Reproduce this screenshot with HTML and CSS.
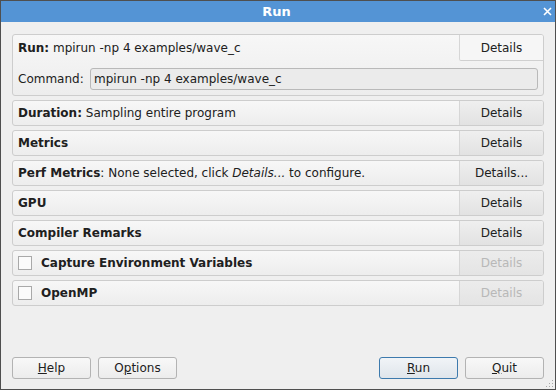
FILE: index.html
```html
<!DOCTYPE html>
<html>
<head>
  <meta charset="utf-8">
  <title>Run</title>
  <link rel="stylesheet" href="styles.css">
</head>
<body>
<div class="window">
  <div class="titlebar">
    <span></span>
    <span class="title">Run</span>
    <svg class="close" width="9" height="9" viewBox="0 0 9 9">
      <path d="M1 1 L8 8 M8 1 L1 8" stroke="#fff" stroke-width="1.6"/>
    </svg>
  </div>

  <div class="content">
    <div class="panel run-panel">
      <div class="run-head">
        <div class="label"><b>Run:</b> mpirun -np 4 examples/wave_c</div>
        <button class="details tab">Details</button>
      </div>
      <div class="command">
        <span>Command:</span>
        <div class="field">mpirun -np 4 examples/wave_c</div>
      </div>
    </div>

    <div class="panel row">
      <div class="label"><b>Duration:</b> Sampling entire program</div>
      <button class="details">Details</button>
    </div>
    <div class="panel row">
      <div class="label"><b>Metrics</b></div>
      <button class="details">Details</button>
    </div>
    <div class="panel row">
      <div class="label"><b>Perf Metrics</b>: None selected, click <i>Details...</i> to configure.</div>
      <button class="details">Details...</button>
    </div>
    <div class="panel row">
      <div class="label"><b>GPU</b></div>
      <button class="details">Details</button>
    </div>
    <div class="panel row">
      <div class="label"><b>Compiler Remarks</b></div>
      <button class="details">Details</button>
    </div>
    <div class="panel row">
      <div class="label"><span class="check"></span><b>Capture Environment Variables</b></div>
      <button class="details" disabled>Details</button>
    </div>
    <div class="panel row">
      <div class="label"><span class="check"></span><b>OpenMP</b></div>
      <button class="details" disabled>Details</button>
    </div>

    <div class="footer">
      <button class="btn"><u>H</u>elp</button>
      <button class="btn">O<u>p</u>tions</button>
      <span class="spacer"></span>
      <button class="btn default"><u>R</u>un</button>
      <button class="btn"><u>Q</u>uit</button>
    </div>
  </div>

  <svg class="grip" width="9" height="9" viewBox="0 0 9 9">
    <g fill="#a9a9a9">
      <rect x="7" y="1" width="1" height="1"/>
      <rect x="4" y="4" width="1" height="1"/>
      <rect x="7" y="4" width="1" height="1"/>
      <rect x="1" y="7" width="1" height="1"/>
      <rect x="4" y="7" width="1" height="1"/>
      <rect x="7" y="7" width="1" height="1"/>
    </g>
  </svg>
</div>
</body>
</html>
```

FILE: styles.css
```css
/* dialog window */
body {
  margin: 0;
  font-family: "DejaVu Sans", sans-serif;
  font-size: 12px;
  color: #202020;
}
.window {
  position: relative;
  width: 556px;
  height: 390px;
  box-sizing: border-box;
  border: 1px solid #4f4f4f;
  background: #efefef;
  display: flex;
  flex-direction: column;
}
.titlebar {
  height: 21px;
  background: #5494d5;
  display: grid;
  grid-template-columns: 1fr auto 1fr;
  align-items: center;
  padding-right: 3px;
}
.title {
  color: #fff;
  font-weight: bold;
  font-size: 13px;
}
.close {
  justify-self: end;
}
.content {
  flex: 1;
  display: flex;
  flex-direction: column;
  gap: 4px;
  padding: 12px 11px 10px 11px;
}

/* panels */
.panel {
  border: 1px solid #cdcdcd;
  border-radius: 3px;
  background: linear-gradient(#f7f7f7, #ededed);
}
.row {
  height: 24px;
  display: flex;
}
.label {
  flex: 1;
  display: flex;
  align-items: center;
  padding-left: 5px;
  white-space: pre;
}
.details {
  width: 84px;
  border: none;
  border-left: 1px solid #d6d6d6;
  border-radius: 0 2px 2px 0;
  background: linear-gradient(#efefef, #e2e2e2);
  font: inherit;
  color: #202020;
  padding: 0;
}
.details:disabled {
  color: #b8b8b8;
  background: linear-gradient(#ececec, #e4e4e4);
}
.run-head {
  height: 26px;
  display: flex;
}
.details.tab {
  background: #f6f6f6;
  border-bottom: 1px solid #d0d0d0;
  border-radius: 0 2px 0 2px;
}
.command {
  display: grid;
  grid-template-columns: 72px 1fr;
  align-items: center;
  padding: 7px 5px 5px 5px;
}
.field {
  height: 20px;
  line-height: 20px;
  border: 1px solid #b9b9b9;
  border-radius: 3px;
  background: #ebebeb;
  padding-left: 3px;
}
.check {
  width: 12px;
  height: 12px;
  border: 1px solid #a9a9a9;
  background: #fbfbfb;
  margin-right: 9px;
}

/* bottom buttons */
.footer {
  margin-top: auto;
  display: flex;
  gap: 7px;
}
.spacer {
  flex: 1;
}
.btn {
  width: 79px;
  height: 22px;
  border: 1px solid #b3b3b3;
  border-radius: 3px;
  background: linear-gradient(#f8f8f8, #ececec);
  font: inherit;
  color: #202020;
  padding: 0;
}
.btn.default {
  border-color: #3d7aad;
  background: linear-gradient(#f1f4f7, #dfe5eb);
}
.grip {
  position: absolute;
  right: 1px;
  bottom: 1px;
}
```
